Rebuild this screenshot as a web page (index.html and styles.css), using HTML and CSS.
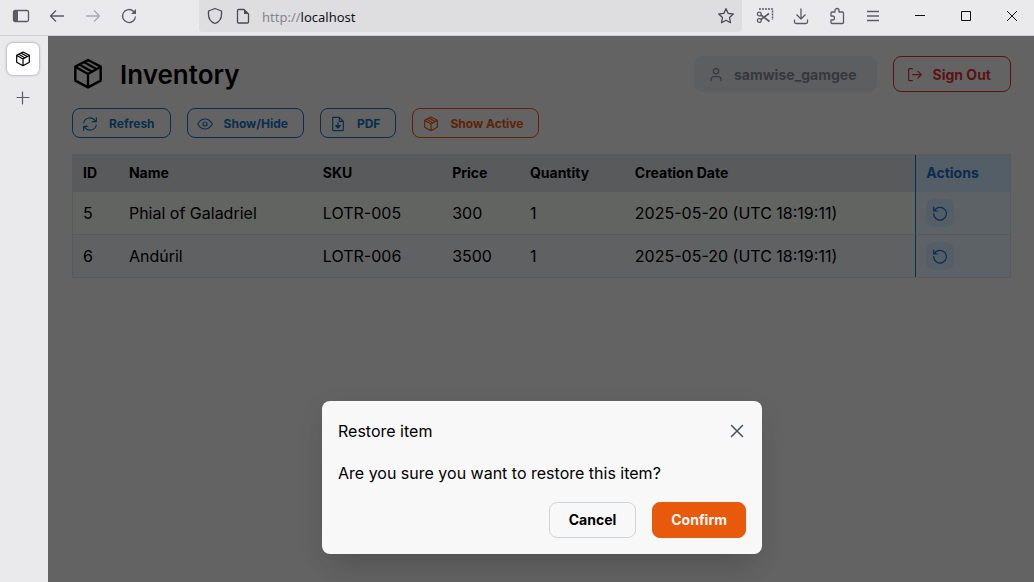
FILE: index.html
```html
<!DOCTYPE html>
<html lang="en">
<head>
<meta charset="utf-8">
<title>Inventory</title>
<link rel="stylesheet" href="styles.css">
</head>
<body>
<svg class="sprite" aria-hidden="true">
  <symbol id="package" viewBox="0 0 24 24"><path d="M12 1.500l9.500 5v10.500L12 22l-9.500-5V6.500zM12 12v10M2.800 6.800L12 12l9.200-5.200M9.200 3.200l8.400 4.700M5.800 5l8.600 5"/></symbol>
  <symbol id="restore" viewBox="0 0 24 24"><path d="M3.500 9a9.500 9.500 0 1 1-.9 4M2.500 3v6h6"/></symbol>
</svg>
<div class="browser">
  <header class="chrome">
    <div class="nav">
      <button class="tool" aria-label="Toggle sidebar"><svg viewBox="0 0 18 18"><rect x="1.500" y="3.500" width="15" height="11" rx="1.500"/><path class="solid" d="M2 4h4v10H2z"/></svg></button>
      <button class="tool" aria-label="Back"><svg viewBox="0 0 18 18"><path d="M16 9H2.500M8 3.500L2.500 9 8 14.500"/></svg></button>
      <button class="tool faded" aria-label="Forward"><svg viewBox="0 0 18 18"><path d="M2 9h13.500M10 3.500L15.500 9 10 14.500"/></svg></button>
      <button class="tool" aria-label="Reload"><svg viewBox="0 0 18 18"><path d="M15.500 9.500A6.500 6.500 0 1 1 13.500 4.300L15 6"/><path class="solid" d="M16 2v5h-5z"/></svg></button>
    </div>
    <div class="address">
      <svg class="glyph" viewBox="0 0 18 18"><path d="M9 1.500L15.500 4v3.500c0 4-2.500 7.500-6.500 9-4-1.500-6.500-5-6.500-9V4z"/></svg>
      <svg class="glyph" viewBox="0 0 18 18"><path d="M4.500 2.500h5.500l4.500 4.500v8q0 1-1 1h-9q-1 0-1-1v-11.500q0-1 1-1z"/><path class="solid" d="M10 2.500v4.500h4.500z"/></svg>
      <p class="url"><span class="scheme">http://</span>localhost</p>
      <button class="tool" aria-label="Bookmark"><svg viewBox="0 0 18 18"><path d="M9 1.700l2.200 4.700 5.100.6-3.800 3.500 1 5.200L9 13.200l-4.500 2.500 1-5.200L1.700 7l5.100-.6z"/></svg></button>
    </div>
    <div class="actions">
      <button class="tool" aria-label="Screenshot"><svg viewBox="0 0 18 18"><path stroke-dasharray="2 1" stroke-width="1.500" d="M3 2h13.500v11"/><path stroke-width="1.700" d="M5 12.500L13 6.500M5 8L13.500 14.500"/><circle cx="3.300" cy="7" r="1.900"/><circle cx="3.300" cy="13.500" r="1.900"/></svg></button>
      <button class="tool" aria-label="Downloads"><svg viewBox="0 0 18 18"><path d="M9 1.500v10M4.500 7.500L9 12l4.500-4.500M2.500 12.500v2.500q0 1.500 1.500 1.500h10q1.500 0 1.500-1.500v-2.500"/></svg></button>
      <button class="tool" aria-label="Extensions"><svg viewBox="0 0 18 18"><path d="M3 9V6q0-1 1-1h3V3.500a2 2 0 0 1 4 0V5h3.500q1 0 1 1v9.500q0 1-1 1H4q-1 0-1-1V13h1.500a2 2 0 0 0 0-4z"/></svg></button>
      <button class="tool" aria-label="Menu"><svg viewBox="0 0 18 18"><path d="M3 4.500h12M3 9h12M3 13.500h12"/></svg></button>
    </div>
    <div class="window-controls">
      <button class="tool" aria-label="Minimize"><svg viewBox="0 0 18 18"><path d="M4 8.500h10"/></svg></button>
      <button class="tool" aria-label="Maximize"><svg viewBox="0 0 18 18"><path d="M4.500 4.500h9v9h-9z"/></svg></button>
      <button class="tool" aria-label="Close window"><svg viewBox="0 0 18 18"><path d="M4 4l10 10M14 4L4 14"/></svg></button>
    </div>
  </header>
  <div class="workspace">
    <nav class="tabs" aria-label="Tabs">
      <button class="tab" aria-label="Inventory tab"><svg><use href="#package"/></svg></button>
      <button class="tool" aria-label="New tab"><svg viewBox="0 0 18 18"><path d="M8.500 3v12M3 8.500h12"/></svg></button>
    </nav>
    <div class="app">
      <main class="page">
        <div class="page-head">
          <svg class="logo"><use href="#package"/></svg>
          <h1>Inventory</h1>
          <button class="btn user" disabled><svg viewBox="0 0 24 24"><circle cx="12" cy="6.500" r="4"/><path d="M4.500 20.500v-1.500a4.500 4.500 0 0 1 4.500-4.500h6a4.500 4.500 0 0 1 4.500 4.500v1.500"/></svg>samwise_gamgee</button>
          <button class="btn signout"><svg viewBox="0 0 24 24"><path d="M8 2.500H4q-1.500 0-1.500 1.500v15Q2.500 20.500 4 20.500h4M8.500 11.500h13M16.500 6.500l5 5-5 5"/></svg>Sign Out</button>
        </div>
        <div class="toolbar">
          <button class="btn small"><svg viewBox="0 0 24 24"><path d="M2.500 10.500A9.500 9.500 0 0 1 20 7.500M21.500 2.500v6H15.500M21.500 13.500A9.500 9.500 0 0 1 4 16.500M2.500 21.500v-6H8.500"/></svg>Refresh</button>
          <button class="btn small"><svg viewBox="0 0 24 24"><path d="M1 12C4 7 7.500 4.500 12 4.500s8 2.500 11 7.500c-3 5-6.500 7.500-11 7.500s-8-2.500-11-7.500z"/><circle cx="12" cy="12" r="3"/></svg>Show/Hide</button>
          <button class="btn small"><svg viewBox="0 0 24 24"><path d="M4 2h10l6 6v12.500q0 1.500-1.500 1.500h-13Q4 22 4 20.500V3.500Q4 2 5.500 2M14 2v6h6M12 10v8M8.500 14.500L12 18l3.500-3.500z"/></svg>PDF</button>
          <button class="btn small orange"><svg><use href="#package"/></svg>Show Active</button>
        </div>
        <table class="items">
          <colgroup><col class="c-id"><col class="c-name"><col class="c-sku"><col class="c-price"><col class="c-qty"><col class="c-date"><col class="c-act"></colgroup>
          <thead>
            <tr><th>ID</th><th>Name</th><th>SKU</th><th>Price</th><th>Quantity</th><th>Creation Date</th><th class="act">Actions</th></tr>
          </thead>
          <tbody>
            <tr><td>5</td><td>Phial of Galadriel</td><td>LOTR-005</td><td>300</td><td>1</td><td>2025-05-20 (UTC 18:19:11)</td><td class="act"><button class="restore" aria-label="Restore Phial of Galadriel"><svg><use href="#restore"/></svg></button></td></tr>
            <tr><td>6</td><td>Andúril</td><td>LOTR-006</td><td>3500</td><td>1</td><td>2025-05-20 (UTC 18:19:11)</td><td class="act"><button class="restore" aria-label="Restore Andúril"><svg><use href="#restore"/></svg></button></td></tr>
          </tbody>
        </table>
      </main>
      <div class="overlay">
        <section class="dialog" role="dialog" aria-modal="true" aria-labelledby="dialog-title">
          <div class="dialog-head">
            <h2 id="dialog-title">Restore item</h2>
            <button class="close" aria-label="Close"><svg viewBox="0 0 18 18"><path d="M3.500 3.500l11 11M14.500 3.500l-11 11"/></svg></button>
          </div>
          <p>Are you sure you want to restore this item?</p>
          <div class="dialog-actions">
            <button class="btn cancel">Cancel</button>
            <button class="btn confirm">Confirm</button>
          </div>
        </section>
      </div>
    </div>
  </div>
</div>
</body>
</html>
```
FILE: styles.css
```css
* { box-sizing: border-box; }
body { margin: 0; font: 16px/24px Inter, "Liberation Sans", sans-serif; color: #000; }
h1, h2, p { margin: 0; font-weight: 400; }
button { font: inherit; color: inherit; border: 0; padding: 0; background: none; }
svg { flex: none; fill: none; stroke: currentColor; stroke-width: 1.5; stroke-linecap: round; stroke-linejoin: round; }
.sprite { position: absolute; width: 0; height: 0; }
.solid { fill: currentColor; stroke: none; }

.browser { min-height: 100vh; display: flex; flex-direction: column; background: #eaeaec; }
.chrome { display: flex; height: 36px; padding: 0 13px 3px 12px; border-bottom: 1px solid #cfcfd2; color: #5b5b66; }
.chrome svg { stroke-width: 1.3; stroke-linecap: butt; }
.tool { display: flex; align-items: center; justify-content: center; }
.tool svg, .glyph { width: 18px; height: 18px; }
.nav, .actions, .window-controls { display: flex; }
.nav { gap: 18px; width: 187px; }
.faded { opacity: .45; }
.address { flex: 1; display: flex; align-items: center; gap: 10px; padding: 0 7px; border-radius: 0 0 4px 4px; background: #dedee0; color: #4a4a55; }
.url { flex: 1; padding-top: 2px; font: 13px/18px "Noto Sans", sans-serif; color: #15141a; }
.scheme { color: #86868b; }
.actions { gap: 18px; padding-left: 14px; }
.window-controls { gap: 28px; padding-left: 29px; color: #111; }
.chrome .window-controls svg { stroke-width: 1; }

.workspace { flex: 1; display: flex; }
.tabs { width: 48px; padding: 7px 9px 0 7px; display: flex; flex-direction: column; gap: 14px; color: #5b5b66; }
.tabs .tool svg { stroke-width: 1.2; }
.tab { height: 32px; display: flex; align-items: center; justify-content: center; border-radius: 6px; background: #fff; color: #000; box-shadow: 0 0 3px #0006; }
.tab svg { width: 16px; height: 16px; stroke-width: 1.8; }

.app { flex: 1; position: relative; background: #f8f8f8; }
.page { padding: 20px 23px 20px 24px; }
.page-head { display: flex; align-items: center; gap: 16px; }
.logo { width: 32px; height: 32px; stroke-width: 1.8; }
h1 { flex: 1; padding-top: 2px; font-size: 26px; line-height: 34px; font-weight: 600; }
.btn { display: flex; align-items: center; justify-content: center; height: 36px; padding: 0 18px; border: 1px solid; border-radius: 8px; font-size: 14px; font-weight: 700; white-space: nowrap; }
.btn svg { width: 16px; height: 16px; stroke-width: 1.8; }
.user, .signout { padding: 2px 19px 0 13px; gap: 10px; }
.user { border-color: #e9ecef; background: #e9ecef; color: #868e96; }
.signout { color: #e03131; }
.toolbar { display: flex; gap: 16px; margin: 16px 0; }
.small { height: 30px; padding: 1px 15px 0 9px; gap: 11px; font-size: 12px; color: #1971c2; }
.orange { padding-left: 10px; color: #e8590c; }

.items { width: 100%; table-layout: fixed; border-collapse: separate; border-spacing: 0; border: 1px solid #dee2e6; }
.c-id { width: 4.9%; } .c-name { width: 20.7%; } .c-sku { width: 13.8%; }
.c-price { width: 8.3%; } .c-qty { width: 11.2%; } .c-date { width: 31%; } .c-act { width: 10.1%; }
.items th, .items td { padding: 0 10px; text-align: left; white-space: nowrap; }
.items th { height: 37px; padding-bottom: 2px; font-size: 14px; font-weight: 700; background: #dee2e6; }
.items td { height: 43px; border-bottom: 1px solid #dee2e6; background: #f5f9f5; }
.items tr:last-child td { height: 42px; border-bottom: 0; background: #f1f3f5; }
.items .act { border-left: 1px solid #1971c2; background: #e7f5ff; }
.items tr:last-child .act { background: #e7f5ff; }
.items th.act, .items thead tr:last-child .act { background: #d0ebff; color: #1971c2; }
.restore { width: 28px; height: 28px; display: flex; align-items: center; justify-content: center; border-radius: 8px; background: #d0ebff; color: #1971c2; }
.restore svg { width: 16px; height: 16px; stroke-width: 1.8; }

.overlay { position: absolute; inset: 0; display: flex; align-items: flex-end; justify-content: center; padding: 0 16px 28px 18px; background: rgba(0, 0, 0, .6); }
.dialog { width: 440px; max-width: 100%; padding: 16px; border-radius: 8px; background: #f8f8f8; box-shadow: 0 20px 28px -12px #0002, 0 8px 28px #0001; }
.dialog-head { display: flex; align-items: center; justify-content: space-between; height: 28px; margin-bottom: 16px; }
h2 { font-size: 16px; }
.close { width: 18px; height: 18px; display: flex; color: #495057; }
.close svg { width: 18px; height: 18px; }
.dialog-actions { display: flex; justify-content: flex-end; gap: 16px; margin-top: 17px; }
.cancel { padding: 0 19px; border-color: #ced4da; background: #f8f8f8; }
.confirm { border-color: #e8590c; background: #e8590c; color: #f8f8f8; }
```
